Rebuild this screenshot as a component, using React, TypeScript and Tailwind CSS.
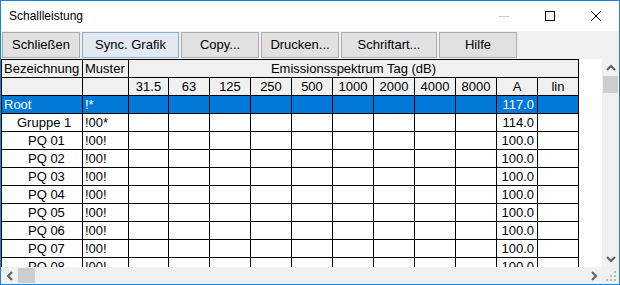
import React from 'react';

const freqs = ['31.5', '63', '125', '250', '500', '1000', '2000', '4000', '8000'];

const rows = [
  { name: 'Root', indent: 'pl-[2px]', muster: '!*', a: '117.0', selected: true },
  { name: 'Gruppe 1', indent: 'pl-[15px]', muster: '!00*', a: '114.0', selected: false },
  ...['01', '02', '03', '04', '05', '06', '07', '08', '09', '10'].map((n) => ({
    name: `PQ ${n}`,
    indent: 'pl-[26px]',
    muster: '!00!',
    a: '100.0',
    selected: false,
  })),
];

const buttons = [
  { label: 'Schließen', w: 'w-[78px]', active: false },
  { label: 'Sync. Grafik', w: 'w-[97px]', active: true },
  { label: 'Copy...', w: 'w-[78px]', active: false },
  { label: 'Drucken...', w: 'w-[78px]', active: false },
  { label: 'Schriftart...', w: 'w-[96px]', active: false },
  { label: 'Hilfe', w: 'w-[78px]', active: false },
];

const cell = 'h-[18px] border-r border-b border-black leading-[17px] whitespace-nowrap overflow-hidden';

function Chevron({ dir }: { dir: 'up' | 'down' | 'left' | 'right' }) {
  const d = {
    up: 'M1 6 L5 2 L9 6',
    down: 'M1 2 L5 6 L9 2',
    left: 'M6 1 L2 5 L6 9',
    right: 'M2 1 L6 5 L2 9',
  }[dir];
  const vertical = dir === 'up' || dir === 'down';
  return (
    <svg
      width={vertical ? 10 : 8}
      height={vertical ? 8 : 10}
      viewBox={vertical ? '0 0 10 8' : '0 0 8 10'}
      fill="none"
      stroke="#606060"
      strokeWidth={2}
    >
      <path d={d} />
    </svg>
  );
}

export default function App() {
  return (
    <div className="w-[620px] h-[285px] border border-[#1883d7] bg-white flex flex-col overflow-hidden font-['Liberation_Sans',Arial,sans-serif] text-black">
      {/* Title bar */}
      <div className="h-[30px] flex items-center shrink-0">
        <span className="pl-[8px] text-[12px] flex-1">Schallleistung</span>
        <div className="w-[46px] h-full flex items-center justify-center">
          <div className="w-[10px] h-px bg-[#c8c8c8]" />
        </div>
        <div className="w-[46px] h-full flex items-center justify-center">
          <div className="w-[10px] h-[10px] border border-black" />
        </div>
        <div className="w-[46px] h-full flex items-center justify-center">
          <svg width="10" height="10" viewBox="0 0 10 10" stroke="black" strokeWidth={1}>
            <path d="M0 0 L10 10 M10 0 L0 10" />
          </svg>
        </div>
      </div>

      {/* Toolbar */}
      <div className="h-[28px] bg-[#f0f0f0] flex items-start gap-[2px] pt-[1px] pl-px shrink-0">
        {buttons.map((b) => (
          <div
            key={b.label}
            className={`${b.w} h-[26px] flex items-center justify-center text-[13px] border ${
              b.active ? 'bg-[#e2e9f1] border-[#8aaed4]' : 'bg-[#e1e1e1] border-[#adadad]'
            }`}
          >
            {b.label}
          </div>
        ))}
      </div>

      {/* Grid + scrollbars */}
      <div className="flex-1 flex flex-col min-h-0">
        <div className="flex-1 flex min-h-0">
          <div className="flex-1 overflow-hidden bg-white">
            <div className="w-[578px] border-l border-t border-black grid grid-cols-[81px_46px_40px_repeat(10,41px)] text-[13px]">
              <div className={`${cell} bg-[#f0f0f0] pl-[2px]`}>Bezeichnung</div>
              <div className={`${cell} bg-[#f0f0f0] pl-[2px]`}>Muster</div>
              <div className={`${cell} bg-[#f0f0f0] col-span-11 text-center`}>Emissionsspektrum Tag (dB)</div>

              <div className={`${cell} bg-[#f0f0f0]`} />
              <div className={`${cell} bg-[#f0f0f0]`} />
              {freqs.map((f) => (
                <div key={f} className={`${cell} bg-[#f0f0f0] text-center`}>
                  {f}
                </div>
              ))}
              <div className={`${cell} bg-[#f0f0f0] text-center`}>A</div>
              <div className={`${cell} bg-[#f0f0f0] text-center`}>lin</div>

              {rows.map((r) => {
                const bg = r.selected ? 'bg-[#0078d7] text-white' : 'bg-white';
                return (
                  <React.Fragment key={r.name}>
                    <div className={`${cell} ${bg} ${r.indent}`}>{r.name}</div>
                    <div className={`${cell} ${bg} pl-[2px]`}>{r.muster}</div>
                    {freqs.map((f) => (
                      <div key={f} className={`${cell} ${bg}`} />
                    ))}
                    <div className={`${cell} ${bg} text-right pr-[3px]`}>{r.a}</div>
                    <div className={`${cell} ${bg}`} />
                  </React.Fragment>
                );
              })}
            </div>
          </div>

          {/* Vertical scrollbar */}
          <div className="w-[17px] bg-[#f0f0f0] flex flex-col shrink-0">
            <div className="h-[17px] flex items-center justify-center">
              <Chevron dir="up" />
            </div>
            <div className="h-[17px] mx-px bg-[#cdcdcd]" />
            <div className="flex-1" />
            <div className="h-[17px] flex items-center justify-center">
              <Chevron dir="down" />
            </div>
          </div>
        </div>

        {/* Horizontal scrollbar */}
        <div className="h-[17px] flex shrink-0">
          <div className="flex-1 bg-[#f0f0f0] flex items-center">
            <div className="w-[17px] h-full flex items-center justify-center">
              <Chevron dir="left" />
            </div>
            <div className="w-[17px] h-[15px] bg-[#cdcdcd]" />
            <div className="flex-1" />
            <div className="w-[17px] h-full flex items-center justify-center">
              <Chevron dir="right" />
            </div>
          </div>
          <div className="w-[17px] bg-[#f0f0f0] relative">
            <svg className="absolute right-[2px] bottom-[2px]" width="11" height="11" viewBox="0 0 11 11" fill="#b8b8b8">
              <rect x="8" y="0" width="2" height="2" />
              <rect x="4" y="4" width="2" height="2" />
              <rect x="8" y="4" width="2" height="2" />
              <rect x="0" y="8" width="2" height="2" />
              <rect x="4" y="8" width="2" height="2" />
              <rect x="8" y="8" width="2" height="2" />
            </svg>
          </div>
        </div>
      </div>
    </div>
  );
}
